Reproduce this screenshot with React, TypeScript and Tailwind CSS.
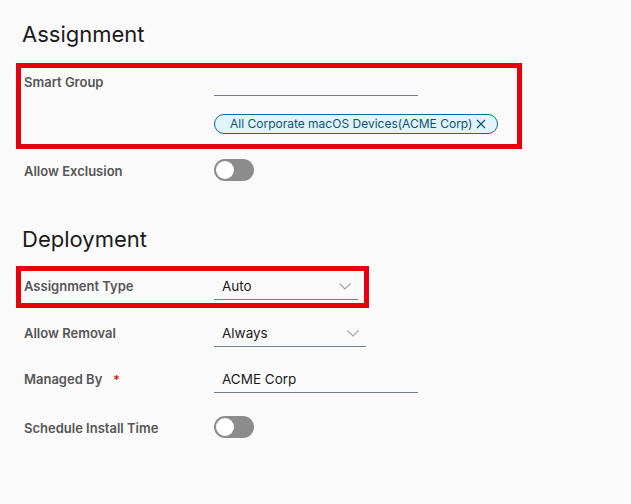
import React from 'react';

const font = { fontFamily: 'Inter, "Noto Sans", sans-serif' };

const Label: React.FC<{ text: string; required?: boolean }> = ({ text, required }) => (
  <div className="flex h-[22px] w-[193px] shrink-0 items-center pl-[3px] pt-[3px] text-[13px] font-semibold text-[#565656]">
    {text}
    {required && <span className="ml-[11px] text-[12px] font-semibold text-[#c92100]">*</span>}
  </div>
);

const Chevron: React.FC = () => (
  <svg width="12" height="7" viewBox="0 0 12 7" fill="none" aria-hidden="true">
    <path d="M0.5 0.5L6 6L11.5 0.5" stroke="#a3a3a3" strokeWidth="1.1" />
  </svg>
);

const Field: React.FC<{ value?: string; width: string; select?: boolean }> = ({ value, width, select }) => (
  <div
    className={`flex h-[26px] items-center justify-between border-b border-[#6f7d87] pl-[8px] pr-[7px] text-[13.5px] text-[#1a1a1a] ${width}`}
  >
    <span>{value}</span>
    {select && <Chevron />}
  </div>
);

const Toggle: React.FC = () => (
  <div className="flex h-[22px] w-[40px] items-center rounded-full bg-[#8c8c8c] p-[2px]">
    <div className="h-[18px] w-[18px] rounded-full bg-white" />
  </div>
);

export default function App() {
  return (
    <div className="h-[504px] w-[631px] bg-[#fafafa] pl-[16px] pt-[20px]" style={font}>
      <h2 className="ml-[6px] text-[22px] font-normal leading-[28px] text-[#1b1b1b]">Assignment</h2>

      <div className="mt-[15px] w-[506px] border-[5px] border-[#e5000b] pb-[10px] pt-[2px]">
        <div className="flex">
          <Label text="Smart Group" />
          <div className="flex flex-col">
            <Field width="w-[204px]" />
            <div className="mt-[18px] flex h-[20px] w-[284px] items-center rounded-full border border-[#0f6690] bg-[#e1f3fb] pl-[15px] text-[12px] text-[#0f5576]">
              All Corporate macOS Devices(ACME Corp)
              <svg className="ml-[4px]" width="10" height="10" viewBox="0 0 10 10" aria-hidden="true">
                <path d="M1 1L9 9M9 1L1 9" stroke="#0f5576" strokeWidth="1.2" />
              </svg>
            </div>
          </div>
        </div>
      </div>

      <div className="mt-[10px] flex items-center pl-[5px]">
        <Label text="Allow Exclusion" />
        <Toggle />
      </div>

      <h2 className="ml-[6px] mt-[44px] text-[22px] font-normal leading-[28px] text-[#1b1b1b]">Deployment</h2>

      <div className="mt-[13px] w-[353px] border-[5px] border-[#e5000b] pb-[3px] pt-[3px]">
        <div className="flex items-start">
          <Label text="Assignment Type" />
          <Field value="Auto" width="w-[144px]" select />
        </div>
      </div>

      <div className="mt-[13px] flex items-start pl-[5px]">
        <Label text="Allow Removal" />
        <Field value="Always" width="w-[152px]" select />
      </div>

      <div className="mt-[20px] flex items-start pl-[5px]">
        <Label text="Managed By" required />
        <Field value="ACME Corp" width="w-[204px]" />
      </div>

      <div className="mt-[23px] flex items-center pl-[5px]">
        <Label text="Schedule Install Time" />
        <Toggle />
      </div>
    </div>
  );
}
